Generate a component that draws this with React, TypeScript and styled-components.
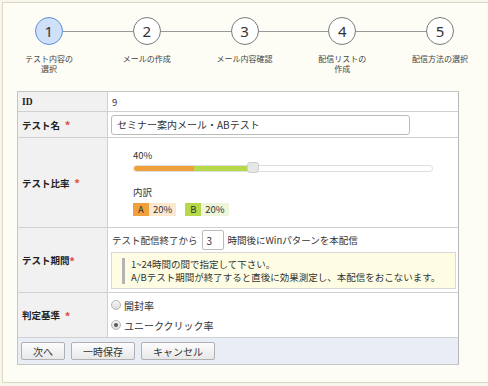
import styled, { createGlobalStyle } from "styled-components";

const GlobalStyle = createGlobalStyle`
  html, body {
    margin: 0;
    padding: 0;
    background: #f7f5ec;
  }
  body {
    font-family: "Noto Sans CJK JP", "Noto Sans", sans-serif;
    color: #333;
  }
`;

const steps = [
  ["テスト内容の", "選択"],
  ["メールの作成"],
  ["メール内容確認"],
  ["配信リストの", "作成"],
  ["配信方法の選択"],
];

const split = { a: 20, b: 20 };

const Panel = styled.div`
  margin: 2px 0 0 2px;
  height: 381px;
  box-sizing: border-box;
  border: 1px solid #dcd8c4;
  border-right: none;
  background: #fdfcf5;
  padding-left: 14px;
`;

const StepList = styled.div`
  display: flex;
  margin-left: -17px;
  width: 489px;
  height: 88px;
  padding-top: 14px;
  box-sizing: border-box;
`;

const Step = styled.div`
  flex: 1;
  display: flex;
  flex-direction: column;
  align-items: center;
`;

const StepTrack = styled.div`
  display: flex;
  align-items: center;
  width: 100%;
`;

const Line = styled.div<{ $hidden?: boolean }>`
  flex: 1;
  height: 1px;
  background: ${(p) => (p.$hidden ? "transparent" : "#999")};
`;

const Circle = styled.div<{ $active?: boolean }>`
  width: 28px;
  height: 28px;
  box-sizing: border-box;
  border-radius: 50%;
  border: 1px solid ${(p) => (p.$active ? "#5d8fd8" : "#7a7a7a")};
  background: ${(p) => (p.$active ? "#cfe1f8" : "#fff")};
  display: flex;
  align-items: center;
  justify-content: center;
  font-family: "Noto Sans", sans-serif;
  font-size: 15px;
  color: #333;
`;

const StepLabel = styled.div`
  margin-top: 9px;
  font-size: 8px;
  line-height: 10px;
  text-align: center;
  color: #444;
`;

const Form = styled.div`
  width: 442px;
  box-sizing: border-box;
  border: 1px solid #c6c6c6;
  border-right-color: #b8b8b8;
  background: #fff;
  font-size: 9.5px;
`;

const Row = styled.div<{ $h: number }>`
  display: grid;
  grid-template-columns: 90px 1fr;
  min-height: ${(p) => p.$h}px;
  border-bottom: 1px solid #d0d0d0;
`;

const Label = styled.div`
  box-sizing: border-box;
  background: #f1f1f1;
  border-right: 1px solid #d0d0d0;
  display: flex;
  align-items: center;
  padding-left: 4px;
  font-family: "Liberation Serif", "Noto Sans CJK JP", serif;
  font-weight: bold;
  font-size: 9.5px;
  color: #222;
`;

const Req = styled.span<{ $tight?: boolean }>`
  color: #e0473a;
  margin-left: ${(p) => (p.$tight ? 0 : 5)}px;
  font-family: "Noto Sans", sans-serif;
`;

const Value = styled.div`
  padding-left: 4px;
  display: flex;
  flex-direction: column;
  justify-content: center;
`;

const TextInput = styled.div`
  width: 299px;
  height: 20px;
  box-sizing: border-box;
  margin-left: -1px;
  border: 1px solid #bbb;
  border-radius: 3px;
  padding-left: 5px;
  display: flex;
  align-items: center;
  font-size: 10px;
`;

const Ratio = styled.div`
  padding: 11px 0 0 25px;
  display: flex;
  flex-direction: column;
  align-items: flex-start;
`;

const Small = styled.div`
  line-height: 12px;
  font-size: 9.5px;
`;

const Track = styled.div`
  position: relative;
  margin-top: 4px;
  width: 300px;
  height: 7px;
  box-sizing: border-box;
  border: 1px solid #ddd;
  border-radius: 4px;
  background: #fff;
  display: flex;
`;

const Fill = styled.div<{ $color: string }>`
  background: ${(p) => p.$color};
  height: 100%;
  &:first-child {
    border-radius: 3px 0 0 3px;
  }
`;

const Handle = styled.div`
  position: absolute;
  top: -4px;
  width: 12px;
  height: 11px;
  box-sizing: border-box;
  margin-left: -6px;
  border: 1px solid #cfcfcf;
  border-radius: 3px;
  background: #e6e6e6;
`;

const Breakdown = styled.div`
  margin-top: 14px;
  line-height: 12px;
`;

const Badges = styled.div`
  margin-top: 5px;
  display: flex;
  gap: 9px;
`;

const Badge = styled.div`
  display: flex;
  height: 13px;
  line-height: 13px;
  font-size: 9.5px;
`;

const Key = styled.span<{ $color: string }>`
  width: 16px;
  text-align: center;
  background: ${(p) => p.$color};
`;

const Amount = styled.span<{ $color: string }>`
  padding: 0 4px;
  background: ${(p) => p.$color};
`;

const Period = styled.div`
  padding: 2px 2px 2px 4px;
`;

const PeriodLine = styled.div`
  display: flex;
  align-items: center;
  height: 20px;
`;

const NumBox = styled.div`
  width: 22px;
  height: 20px;
  box-sizing: border-box;
  margin: 0 4px;
  border: 1px solid #bbb;
  border-radius: 2px;
  padding-left: 4px;
  display: flex;
  align-items: center;
  font-size: 10px;
`;

const Notice = styled.div`
  margin: 2px 0 0 -1px;
  border: 1px solid #d8d8d8;
  background: #fefde3;
  padding: 5px 0 4px 10px;
`;

const NoticeText = styled.div`
  border-left: 3px solid #b4b4b4;
  padding-left: 6px;
  line-height: 13px;
  font-size: 9.5px;
`;

const Radios = styled.div`
  padding: 2px 0 2px 3px;
  display: flex;
  flex-direction: column;
  justify-content: center;
`;

const RadioRow = styled.div`
  display: flex;
  align-items: center;
  gap: 3px;
  height: 20px;
  font-size: 10px;
`;

const RadioDot = styled.span<{ $on?: boolean }>`
  width: 10px;
  height: 10px;
  box-sizing: border-box;
  border-radius: 50%;
  border: 1px solid #b5b5b5;
  background: linear-gradient(#f6f6f6, #dcdcdc);
  display: flex;
  align-items: center;
  justify-content: center;
  &::after {
    content: "";
    width: 4px;
    height: 4px;
    border-radius: 50%;
    background: ${(p) => (p.$on ? "#555" : "transparent")};
  }
`;

const Actions = styled.div`
  background: #e9edf5;
  height: 26px;
  display: flex;
  align-items: center;
  gap: 6px;
  padding-left: 3px;
`;

const Button = styled.div`
  height: 18px;
  box-sizing: border-box;
  padding: 0 11px;
  border: 1px solid #b0b0b0;
  border-radius: 2px;
  background: linear-gradient(#fcfcfc, #e8e8e8);
  display: flex;
  align-items: center;
  font-size: 10px;
  color: #333;
`;

export default function App() {
  const total = split.a + split.b;
  return (
    <>
      <GlobalStyle />
      <Panel>
        <StepList>
          {steps.map((label, ix) => (
            <Step key={ix}>
              <StepTrack>
                <Line $hidden={ix === 0} />
                <Circle $active={ix === 0}>{ix + 1}</Circle>
                <Line $hidden={ix === steps.length - 1} />
              </StepTrack>
              <StepLabel>
                {label.map((l, i) => (
                  <div key={i}>{l}</div>
                ))}
              </StepLabel>
            </Step>
          ))}
        </StepList>
        <Form>
          <Row $h={19}>
            <Label>ID</Label>
            <Value>9</Value>
          </Row>
          <Row $h={25}>
            <Label>
              テスト名<Req>*</Req>
            </Label>
            <Value>
              <TextInput>セミナー案内メール・ABテスト</TextInput>
            </Value>
          </Row>
          <Row $h={89}>
            <Label>
              テスト比率<Req>*</Req>
            </Label>
            <Ratio>
              <Small>{total}%</Small>
              <Track>
                <Fill $color="#f0a03c" style={{ width: split.a * 3 }} />
                <Fill $color="#b7d84a" style={{ width: split.b * 3 }} />
                <Handle style={{ left: total * 3 - 1 }} />
              </Track>
              <Breakdown>内訳</Breakdown>
              <Badges>
                <Badge>
                  <Key $color="#f0a03c">A</Key>
                  <Amount $color="#fde8cf">{split.a}%</Amount>
                </Badge>
                <Badge>
                  <Key $color="#b7d84a">B</Key>
                  <Amount $color="#eef5d8">{split.b}%</Amount>
                </Badge>
              </Badges>
            </Ratio>
          </Row>
          <Row $h={64}>
            <Label>
              テスト期間<Req $tight>*</Req>
            </Label>
            <Period>
              <PeriodLine>
                テスト配信終了から<NumBox>3</NumBox>時間後にWinパターンを本配信
              </PeriodLine>
              <Notice>
                <NoticeText>
                  <div>1~24時間の間で指定して下さい。</div>
                  <div>A/Bテスト期間が終了すると直後に効果測定し、本配信をおこないます。</div>
                </NoticeText>
              </Notice>
            </Period>
          </Row>
          <Row $h={44}>
            <Label>
              判定基準<Req>*</Req>
            </Label>
            <Radios>
              <RadioRow>
                <RadioDot />
                開封率
              </RadioRow>
              <RadioRow>
                <RadioDot $on />
                ユニーククリック率
              </RadioRow>
            </Radios>
          </Row>
          <Actions>
            <Button>次へ</Button>
            <Button>一時保存</Button>
            <Button>キャンセル</Button>
          </Actions>
        </Form>
      </Panel>
    </>
  );
}
